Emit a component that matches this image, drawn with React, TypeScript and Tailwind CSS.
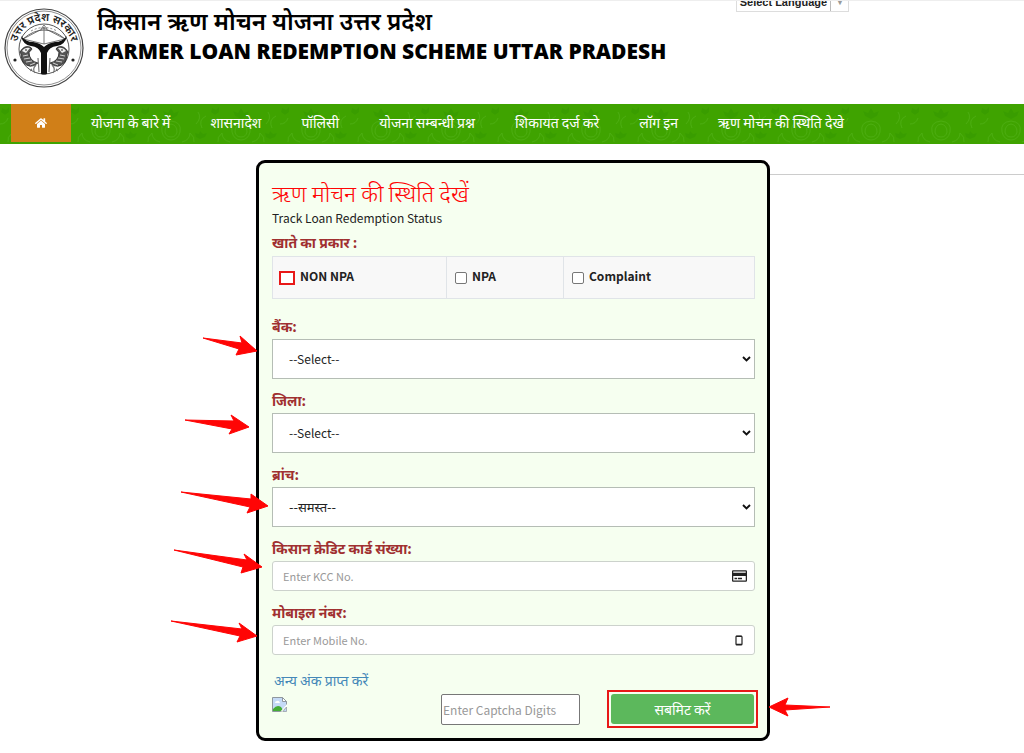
import React from 'react';
import { FaHome, FaRegCreditCard } from 'react-icons/fa';

const navItems = [
  'योजना के बारे में',
  'शासनादेश',
  'पॉलिसी',
  'योजना सम्बन्धी प्रश्न',
  'शिकायत दर्ज करे',
  'लॉग इन',
  'ऋण मोचन की स्थिति देखे',
];

const accountTypes = [
  { id: 'non-npa', label: 'NON NPA', cell: 'w-[174px]', marked: true },
  { id: 'npa', label: 'NPA', cell: 'w-[117px]', marked: false },
  { id: 'complaint', label: 'Complaint', cell: 'flex-1', marked: false },
];

interface ArrowProps {
  points: string;
  className: string;
}

const Arrow: React.FC<ArrowProps> = ({ points, className }) => (
  <svg
    width="90"
    height="24"
    aria-hidden="true"
    className={`pointer-events-none absolute overflow-visible ${className}`}
  >
    <polygon points={points} fill="#ff0505" stroke="#ff0505" strokeWidth="1" strokeLinejoin="round" />
  </svg>
);

const Emblem = () => (
  <svg viewBox="0 0 80 80" className="h-20 w-20 shrink-0" role="img" aria-label="उत्तर प्रदेश सरकार">
    <defs>
      <path id="emblem-arc" d="M12 41a28 28 0 0 1 56 0" />
    </defs>
    <g fill="none" stroke="#444">
      <circle cx="40" cy="40" r="39" strokeWidth="1.2" />
      <circle cx="40" cy="40" r="37" strokeWidth="0.6" />
      <circle cx="40" cy="41" r="25" strokeWidth="0.9" />
    </g>
    <text fontSize="11" fontWeight="600" fill="#222" textAnchor="middle">
      <textPath href="#emblem-arc" startOffset="50%">उत्तर प्रदेश सरकार</textPath>
    </text>
    <circle cx="11" cy="52" r="1.6" fill="#222" />
    <circle cx="69" cy="52" r="1.6" fill="#222" />
    {/* bow */}
    <path d="M19 31Q40 13 61 31" fill="none" stroke="#555" strokeWidth="0.9" />
    <path d="M27 23Q40 16 53 23" fill="none" stroke="#666" strokeWidth="0.8" strokeDasharray="2 2" />
    <path d="M19 31L40 20L61 31L40 36ZM40 19V36M37 21L40 17L43 21" fill="none" stroke="#555" strokeWidth="0.8" />
    {/* rivers */}
    <path
      d="M17 28Q22 34 29 34Q36 35 40 39Q44 35 51 34Q58 34 63 28Q61 37 53 38Q45 39 43 45L43 66Q40 67 37 66L37 45Q35 39 27 38Q19 37 17 28Z"
      fill="#111"
    />
    {/* fish */}
    <g id="emblem-fish">
      <path d="M16 44Q20 37 26 39Q30 41 25 44Q25 53 34 55Q26 62 19 54Q17 50 17 46Z" fill="#555" stroke="#222" strokeWidth="0.8" />
      <path d="M18 43Q21 39 26 40L22 45Z" fill="#eee" />
      <path d="M19 48L24 47M20 51L26 50M22 54L28 53M26 57L31 55" stroke="#eee" strokeWidth="0.8" />
      <path d="M34 50L35 64M32 57Q28 61 31 65M28 61Q26 62 27 63" fill="none" stroke="#777" strokeWidth="1.2" />
      <circle cx="22" cy="42" r="0.8" fill="#111" />
    </g>
    <use href="#emblem-fish" transform="translate(80 0) scale(-1 1)" />
  </svg>
);

const NavPattern = () => (
  <svg className="absolute inset-0 h-full w-full" aria-hidden="true">
    <defs>
      <pattern id="damask" width="70" height="40" patternUnits="userSpaceOnUse">
        <g fill="none" stroke="#55b51d" strokeWidth="1" opacity="0.55">
          <path d="M22 28q-2-10 9-11q11 1 9 11q-2 8-9 8q-7 0-9-8z" />
          <path d="M25 28q0-7 6-8q6 1 6 8q-1 5-6 5q-5 0-6-5z" />
          <path d="M20 38q-8-2-8-9q-5 4-4 9M42 38q8-2 8-9q5 4 4 9" />
          <path d="M56 20q6-6 2-12M62 24q-4-8 4-12M0 20q6 0 8-6" />
        </g>
        <g fill="#349900" opacity="0.6">
          <path d="M31 4l3 5l5-2l-2 5l-6 3l-6-3l-2-5l5 2z" />
          <path d="M60 27l3 3l4-1l-2 4l-5 2l-4-2l-1-4l4 1z" />
          <path d="M2 4l4 2l3-3l0 5l-4 3l-4-3z" />
        </g>
      </pattern>
    </defs>
    <rect width="100%" height="100%" fill="url(#damask)" />
  </svg>
);

const BrokenImage = () => (
  <svg width="15" height="15" viewBox="0 0 15 15" role="img" aria-label="Captcha">
    <path d="M0.5 0.5H10.5L14.5 4.5V8L10 14.5H0.5Z" fill="#c5daf7" stroke="#8f979f" />
    <path d="M10.5 0.5V4.5H14.5Z" fill="#fff" stroke="#8f979f" />
    <path d="M3 6q0-2 2-2q2-1 3 2z" fill="#fff" />
    <path d="M1 14V12Q5 7 9 10L11 13L10 14Z" fill="#45ad36" />
    <path d="M15 7L8.5 14.5H10L15 9Z" fill="#fff" />
    <path d="M14.5 10V14.5H11Z" fill="#c5daf7" stroke="#8f979f" strokeWidth="0.7" />
  </svg>
);

const PhoneIcon = () => (
  <svg width="8" height="11" viewBox="0 0 8 11" aria-hidden="true">
    <rect x="1" y="1" width="6" height="9" rx="1" fill="none" stroke="#222" strokeWidth="1.2" />
    <path d="M1 1.4H7M1 9.4H7" stroke="#222" strokeWidth="1.4" />
  </svg>
);

interface FieldProps {
  id: string;
  label: string;
  arrow: ArrowProps;
  children: React.ReactNode;
}

const Field: React.FC<FieldProps> = ({ id, label, arrow, children }) => (
  <div className="relative">
    <label htmlFor={id} className="mb-1 block text-sm leading-[18px] font-bold text-[#a03030]">
      {label}
    </label>
    {children}
    <Arrow {...arrow} />
  </div>
);

interface SelectBoxProps {
  id: string;
  value: string;
  textSize?: string;
}

const SelectBox: React.FC<SelectBoxProps> = ({ id, value, textSize = 'text-xs' }) => (
  <div className="relative">
    <select
      id={id}
      className={`block h-10 w-full appearance-none border border-[#b5bdb5] bg-white px-4 text-[#222] ${textSize}`}
    >
      <option>{value}</option>
    </select>
    <svg width="9" height="6" viewBox="0 0 9 6" aria-hidden="true" className="pointer-events-none absolute top-[17px] right-1">
      <path d="M1 1L4.5 4.5L8 1" fill="none" stroke="#111" strokeWidth="1.9" />
    </svg>
  </div>
);

interface TextBoxProps {
  id: string;
  placeholder: string;
  icon: React.ReactNode;
}

const TextBox: React.FC<TextBoxProps> = ({ id, placeholder, icon }) => (
  <div className="relative">
    <input
      id={id}
      type="text"
      placeholder={placeholder}
      className="block h-[30px] w-full rounded-[3px] border border-[#ccd2cc] bg-white px-[10px] text-[11px] placeholder:text-[#999]"
    />
    <span className="pointer-events-none absolute inset-y-0 right-0 flex w-8 items-center justify-center text-[#222]">
      {icon}
    </span>
  </div>
);

const App = () => {
  return (
    <div className="min-h-screen bg-white font-['Noto_Sans_CJK_SC','Noto_Sans',sans-serif] text-[#222]">
      <header className="border-t border-[#eee]">
        <div className="flex h-[103px] items-start gap-[13px] pl-1">
          <div className="pt-[7px]">
            <Emblem />
          </div>
          <div className="flex-1 pt-[5px] font-['Open_Sans','Noto_Sans',sans-serif] text-black">
            <p className="text-2xl leading-[30px] font-semibold whitespace-nowrap">किसान ऋण मोचन योजना उत्तर प्रदेश</p>
            <h1 className="text-[21px] leading-[30px] font-extrabold whitespace-nowrap">
              FARMER LOAN REDEMPTION SCHEME UTTAR PRADESH
            </h1>
          </div>
          <div className="mr-[175px] flex h-[11px] items-end overflow-hidden border-x border-b border-[#ddd]">
            <a
              href="#language"
              className="flex shrink-0 items-center px-[3px] font-['Liberation_Sans',sans-serif] text-[11px] leading-[18px] font-bold whitespace-nowrap text-[#222]"
            >
              Select Language
              <span className="ml-[3px] border-l border-[#bbb] pl-1 text-[10px] text-[#999]">▼</span>
            </a>
          </div>
        </div>
      </header>

      <nav className="relative bg-[#3fa300]">
        <NavPattern />
        <div className="relative flex h-10 items-start pl-[11px] text-sm whitespace-nowrap text-white">
          <a href="#home" aria-label="Home" className="flex h-[38px] w-[60px] items-center justify-center bg-[#d07f18]">
            <FaHome className="h-3 w-3" />
          </a>
          {navItems.map((item) => (
            <a key={item} href="#menu" className="px-5 leading-9">
              {item}
            </a>
          ))}
        </div>
      </nav>

      <main className="grid grid-cols-[25%_minmax(0,514px)_1fr] pt-4">
        <div />
        <form
          onSubmit={(e) => e.preventDefault()}
          className="rounded-[9px] border-[3px] border-black bg-[#f6fff0] pt-[15px] pr-3 pb-[10px] pl-[13px]"
        >
          <h2 className="mb-1 text-[23px] leading-7 font-light text-[#ff0505]">ऋण मोचन की स्थिति देखें</h2>
          <p className="text-xs leading-4">Track Loan Redemption Status</p>

          <fieldset className="mb-[18px] pt-[7px]">
            <legend className="contents">
              <span className="mb-1 block text-sm leading-[18px] font-bold text-[#a03030]">खाते का प्रकार :</span>
            </legend>
            <div className="mt-[5px] flex h-[43px] divide-x divide-[#e0e4e8] border border-[#e0e4e8] bg-[#f8f8f8]">
              {accountTypes.map((type) => (
                <div key={type.id} className={`flex items-center gap-[5px] pl-2 ${type.cell}`}>
                  <input
                    id={type.id}
                    type="checkbox"
                    className={
                      type.marked
                        ? '-ml-[2px] h-[14px] w-4 appearance-none border-2 border-[#e81818] bg-white'
                        : 'h-3 w-3 appearance-none rounded-[2px] border border-[#777] bg-white'
                    }
                  />
                  <label htmlFor={type.id} className="pb-1 text-xs leading-4 font-bold">
                    {type.label}
                  </label>
                </div>
              ))}
            </div>
          </fieldset>

          <div className="flex flex-col gap-3">
            <Field
              id="bank"
              label="बैंक:"
              arrow={{ className: 'top-[19px] -left-[69px]', points: '0,2 39,7 37,0 54,15 33,19 36,13' }}
            >
              <SelectBox id="bank" value="--Select--" />
            </Field>
            <Field
              id="district"
              label="जिला:"
              arrow={{ className: 'top-6 -left-[87px]', points: '0,5 49,6 46,0 64,12 44,19 47,14' }}
            >
              <SelectBox id="district" value="--Select--" />
            </Field>
            <Field
              id="branch"
              label="ब्रांच:"
              arrow={{ className: 'top-[26px] -left-[91px]', points: '0,1 70,8 70,3 87,15 66,22 69,16' }}
            >
              <SelectBox id="branch" value="--समस्त--" textSize="text-[13px]" />
            </Field>
            <Field
              id="kcc"
              label="किसान क्रेडिट कार्ड संख्या:"
              arrow={{ className: 'top-[11px] -left-[98px]', points: '0,0 73,10 70,4 88,17 67,23 69,17' }}
            >
              <TextBox id="kcc" placeholder="Enter KCC No." icon={<FaRegCreditCard className="h-[14px] w-[15px]" />} />
            </Field>
            <Field
              id="mobile"
              label="मोबाइल नंबर:"
              arrow={{ className: 'top-[18px] -left-[101px]', points: '0,0 71,8 68,2 86,15 66,21 69,15' }}
            >
              <TextBox id="mobile" placeholder="Enter Mobile No." icon={<PhoneIcon />} />
            </Field>
          </div>

          <a href="#captcha" className="mt-[15px] ml-[2px] block text-sm leading-5 text-[#4488b8]">
            अन्य अंक प्राप्त करें
          </a>
          <div className="-mr-[3px] flex items-center justify-between">
            <div className="w-[169px] pb-[10px]">
              <BrokenImage />
            </div>
            <input
              type="text"
              aria-label="Captcha"
              placeholder="Enter Captcha Digits"
              className="h-[31px] w-[139px] rounded-[2px] border border-[#777] bg-white px-[1px] text-xs placeholder:text-[#999]"
            />
            <div className="relative ml-[27px] flex-1 border-2 border-[#e81818] p-[2px]">
              <button type="submit" className="h-[30px] w-full rounded-[3px] bg-[#5cb85c] text-sm text-white">
                सबमिट करें
              </button>
              <Arrow className="top-1 left-[157px]" points="64,11 19,9 22,2 3,11 22,20 19,14" />
            </div>
          </div>
        </form>
        <hr className="mt-[14px] border-[#ccc]" />
      </main>
    </div>
  );
};

export default App;
